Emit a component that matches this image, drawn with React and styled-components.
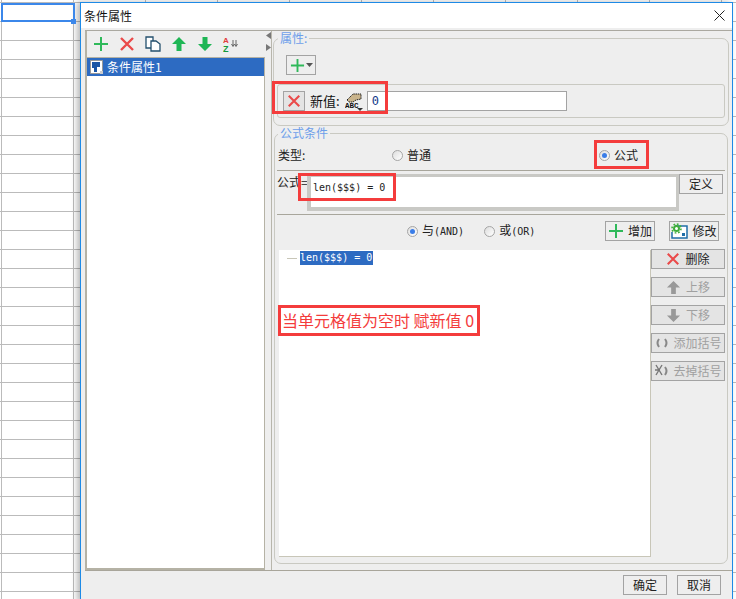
import React from "react";
import styled, { createGlobalStyle } from "styled-components";

const CJK = `"Noto Sans CJK SC", "Liberation Sans", sans-serif`;
const MONO = `"DejaVu Sans Mono", monospace`;
const RED = "#f43c3c";

const GlobalStyle = createGlobalStyle`
  html, body { margin: 0; padding: 0; background: #fff; }
  * { box-sizing: border-box; }
`;

const Sheet = styled.div`
  position: relative;
  display: flex;
  width: 736px;
  height: 599px;
  padding: 2px 3px 0 80px;
  overflow: hidden;
  font: 12px/14px ${CJK};
  color: #222;
  background-color: #fff;
  background-image: linear-gradient(#bbb 1px, transparent 1px),
    linear-gradient(90deg, #bbb 1px, transparent 1px);
  background-size: 100% 19px, 72px 100%;
  background-position: 0 2px, 1px 0;
`;

const ActiveCell = styled.div`
  position: absolute;
  left: 1px;
  top: 3px;
  width: 74px;
  height: 19px;
  border: 2px solid #3b87ea;
  &::after {
    content: "";
    position: absolute;
    right: -3px;
    bottom: -4px;
    width: 5px;
    height: 5px;
    background: #3b87ea;
  }
`;

const Dialog = styled.div`
  flex: 1;
  display: flex;
  flex-direction: column;
  height: 600px;
  border: 1px solid #1e8ae6;
  background: #eee;
  box-shadow: -3px 0 6px rgba(0, 0, 0, 0.28);
`;

const TitleBar = styled.div`
  display: flex;
  align-items: center;
  justify-content: space-between;
  height: 25px;
  padding: 0 7px 0 3px;
  background: #fff;
  color: #111;
`;

const Main = styled.div`
  display: flex;
  height: 541px;
  margin: 2px 0 0 4px;
  border-top: 1px solid #aaa8a0;
  border-bottom: 1px solid #a8a59a;
`;

const LeftPanel = styled.div`
  display: flex;
  flex-direction: column;
  width: 180px;
  border-left: 2px solid #b5b2a5;
  border-bottom: 2px solid #b5b2a5;
`;

const Toolbar = styled.div`
  display: flex;
  align-items: center;
  gap: 10px;
  height: 26px;
  padding-left: 6px;
  & > svg { flex: none; }
`;

const TreeList = styled.div`
  flex: 1;
  background: #fff;
  border-top: 1px solid #b5b2a5;
  border-right: 1px solid #b5b2a5;
`;

const TreeItem = styled.div`
  display: flex;
  align-items: center;
  gap: 4px;
  height: 18px;
  padding-left: 3px;
  background: #2d6bc2;
  color: #fff;
`;

const Splitter = styled.div`
  display: flex;
  flex-direction: column;
  align-items: center;
  gap: 5px;
  width: 7px;
  padding-top: 1px;
  border-right: 1px solid #b8b6ac;
`;

const RightPanel = styled.div`
  width: 458px;
`;

const Group = styled.fieldset`
  margin: 0 ${(p) => p.$inset}px;
  padding: 0 2px ${(p) => p.$bottom}px;
  min-width: 0;
  border: 1px solid #c9c9c2;
  border-radius: 7px;
`;

const GroupTitle = styled.legend`
  margin-left: ${(p) => p.$indent}px;
  padding: 0 2px;
  color: #6d9eea;
  line-height: 14px;
`;

const AddRow = styled.div`
  padding: 10px 0 9px 10px;
`;

const ValuePanel = styled.div`
  display: flex;
  align-items: center;
  height: 34px;
  margin: 0 1px;
  padding-left: 5px;
  border: 1px solid #c9c9c2;
  border-radius: 3px;
`;

const ValueLabel = styled.span`
  margin: 0 5px;
  font-size: 13px;
  color: #111;
`;

const ValueInput = styled.div`
  width: 200px;
  height: 20px;
  margin-left: 4px;
  padding-left: 4px;
  border: 1px solid #a3a3a3;
  background: #fff;
  font: 12px/18px ${MONO};
  color: #123a8a;
`;

const Button = styled.button`
  display: flex;
  align-items: center;
  justify-content: center;
  gap: ${(p) => p.$gap ?? 4}px;
  flex: none;
  width: ${(p) => p.$w}px;
  height: 20px;
  padding: 0;
  border: 1px solid #a3a3a3;
  border-radius: 0;
  background: ${(p) => p.$fill ?? "#eee"};
  font: 12px/14px ${CJK};
  color: ${(p) => (p.disabled ? "#a0a0a0" : "#222")};
`;

const TypeRow = styled.div`
  display: grid;
  grid-template-columns: 114px 207px 1fr;
  align-items: center;
  height: 31px;
  padding-left: 1px;
  border-bottom: 1px solid #a8a69c;
`;

const Radio = styled.span`
  display: inline-flex;
  align-items: center;
  gap: 4px;
  white-space: nowrap;
  color: #222;
`;

const RadioDot = styled.i`
  flex: none;
  width: 11px;
  height: 11px;
  border: 1px solid #a5a5a5;
  border-radius: 50%;
  background: linear-gradient(135deg, #ddd, #fff);
  &::after {
    content: "";
    display: ${(p) => (p.$on ? "block" : "none")};
    width: 5px;
    height: 5px;
    margin: 2px;
    border-radius: 50%;
    background: #3a7de8;
  }
`;

const Mono = styled.span`
  font: 10px/14px ${MONO};
`;

const FormulaRow = styled.div`
  display: flex;
  align-items: flex-start;
  height: 44px;
  padding-top: 3px;
  border-bottom: 1px solid #a8a69c;
`;

const FormulaLabel = styled.span`
  flex: none;
  width: 30px;
  line-height: 16px;
  white-space: nowrap;
`;

const FormulaBox = styled.div`
  flex: none;
  width: 372px;
  height: 37px;
  padding: 4px 0 0 2px;
  border: solid #c9c9c5;
  border-width: 3px 3px 4px 4px;
  background: #fff;
  font: 10px/14px ${MONO};
  color: #222;
`;

const LogicRow = styled.div`
  display: flex;
  align-items: flex-start;
  height: 34px;
  padding: 6px 6px 0 130px;
`;

const LogicButtons = styled.div`
  display: flex;
  gap: 14px;
  margin-left: auto;
`;

const LogicRadios = styled.div`
  display: flex;
  align-items: center;
  gap: 20px;
  height: 20px;
`;

const ListArea = styled.div`
  display: flex;
  padding-left: 2px;
`;

const RuleList = styled.div`
  display: flex;
  align-items: flex-start;
  width: 372px;
  height: 307px;
  margin-top: 1px;
  padding: 1px 0 0 8px;
  background: #fff;
  border-right: 1px solid #c8c6b8;
  border-bottom: 1px solid #c8c6b8;
`;

const TreeLine = styled.i`
  width: 10px;
  height: 1px;
  margin: 7px 3px 0 0;
  background: #c8c6b8;
`;

const SelectedRule = styled.span`
  padding-right: 1px;
  background: #2d6bc2;
  color: #fff;
  font: 10px/14px ${MONO};
`;

const SideButtons = styled.div`
  display: flex;
  flex-direction: column;
  gap: 8px;
`;

const Footer = styled.div`
  display: flex;
  justify-content: flex-end;
  gap: 10px;
  padding: 4px 11px 0 0;
`;

const Callout = styled.div`
  position: absolute;
  left: ${(p) => p.$x}px;
  top: ${(p) => p.$y}px;
  width: ${(p) => p.$w}px;
  height: ${(p) => p.$h}px;
  border: 3px solid ${RED};
  pointer-events: none;
`;

const Note = styled(Callout)`
  padding-left: 1px;
  background: #fff;
  color: ${RED};
  font: 16px/25px ${CJK};
  white-space: pre;
`;

const Icon = ({ size = 16, children }) => (
  <svg width={size} height={size} viewBox="0 0 16 16" fill="none">
    {children}
  </svg>
);

const PlusIcon = ({ size = 16 }) => (
  <Icon size={size}>
    <path d="M8 1v14M1 8h14" stroke="#2fb95a" strokeWidth="2" />
  </Icon>
);

const CrossIcon = ({ size = 16 }) => (
  <Icon size={size}>
    <path d="M2 2l12 12M14 2L2 14" stroke="#ea4a4a" strokeWidth="2.4" />
  </Icon>
);

const ArrowIcon = ({ color, down, size = 16 }) => (
  <Icon size={size}>
    <path
      d={down ? "M5.5 1h5v7H15l-7 7-7-7h4.5z" : "M8 1l7 7h-4.5v7h-5V8H1z"}
      fill={color}
    />
  </Icon>
);

const CopyIcon = () => (
  <Icon>
    <path d="M1 1h7v11H1z" fill="#fff" stroke="#24506e" strokeWidth="1.3" />
    <path d="M6 5h5l4 3v7H6z" fill="#fff" stroke="#24506e" strokeWidth="1.3" />
  </Icon>
);

const SortIcon = () => (
  <svg width="17" height="17" viewBox="0 0 17 17">
    <text x="0" y="7" fontFamily="Liberation Sans" fontSize="8" fontWeight="700" fill="#e23b3b">A</text>
    <text x="0" y="16" fontFamily="Liberation Sans" fontSize="9" fontWeight="700" fill="#149a3c">Z</text>
    <path d="M10 4v6M13 4v6M8.500 8l1.500 2.500L11.500 8M11.500 8l1.500 2.500L14.500 8" stroke="#666" fill="none" />
  </svg>
);

const PageIcon = () => (
  <svg width="13" height="15" viewBox="0 0 13 15">
    <path d="M.5.5h12v13h-12z" fill="#fff" stroke="#999" />
    <path d="M2 2h8v5H7v5H4V8H2z" fill="#1a55a5" />
    <path d="M10 11h3v3h-3z" fill="#ccc" />
  </svg>
);

const TinyArrow = ({ right }) => (
  <svg width="5" height="7" viewBox="0 0 5 7">
    <path d={right ? "M0 0l5 3.500L0 7z" : "M5 0L0 3.500 5 7z"} fill="#777" />
  </svg>
);

const CaretDown = () => (
  <svg width="7" height="4" viewBox="0 0 7 4">
    <path d="M0 0h7L3.500 4z" fill="#555" />
  </svg>
);

const HandAbcIcon = () => (
  <svg width="18" height="19" viewBox="0 0 18 19">
    <path d="M2 8l6-6h8v5l-5 1-3 2H4z" fill="#c9b48c" stroke="#222" strokeDasharray="1.5 .7" />
    <text x="0" y="16" fontFamily="Liberation Mono" fontSize="7.5" fontWeight="700" fill="#111">ABC</text>
    <path d="M12 16h6l-3 3z" fill="#333" />
  </svg>
);

const GearDocIcon = () => (
  <svg width="17" height="16" viewBox="0 0 17 16">
    <path d="M4 3h12v12H1V9" fill="#fff" stroke="#1f6ea8" strokeWidth="1.5" />
    <circle cx="5.5" cy="5.5" r="3.5" fill="#3fae3c" />
    <circle cx="5.5" cy="5.5" r="4.5" fill="none" stroke="#3fae3c" strokeWidth="1.6" strokeDasharray="1.8 1.7" />
    <circle cx="5.500" cy="5.500" r="1.500" fill="#fff" />
    <path d="M11 10h3v3h-3z" fill="#1f6ea8" />
  </svg>
);

const BracketIcon = ({ struck }) => (
  <svg width="16" height="14" viewBox="0 0 16 14">
    <path d={struck ? "M11 3q3 4 0 8" : "M5 3Q2 7 5 11M11 3q3 4 0 8"} stroke="#888" strokeWidth="2" fill="none" />
    {struck && <path d="M2 1l6 10M8 1L2 11M1 6h5" stroke="#777" strokeWidth="1.4" />}
  </svg>
);

const SideButton = (props) => <Button $w={74} $fill="#e4e4e4" $gap={5} {...props} />;

export default function App() {
  return (
    <>
      <GlobalStyle />
      <Sheet>
        <ActiveCell />
        <Dialog>
          <TitleBar>
            条件属性
            <svg width="11" height="11" viewBox="0 0 11 11">
              <path d="M.5.5l10 10M10.500.5l-10 10" stroke="#222" />
            </svg>
          </TitleBar>
          <Main>
            <LeftPanel>
              <Toolbar>
                <PlusIcon />
                <CrossIcon />
                <CopyIcon />
                <ArrowIcon color="#1fb655" />
                <ArrowIcon color="#1fb655" down />
                <SortIcon />
              </Toolbar>
              <TreeList>
                <TreeItem>
                  <PageIcon />
                  条件属性1
                </TreeItem>
              </TreeList>
            </LeftPanel>
            <Splitter>
              <TinyArrow />
              <TinyArrow right />
            </Splitter>
            <RightPanel>
              <Group $inset={1} $bottom={7}>
                <GroupTitle $indent={2}>属性:</GroupTitle>
                <AddRow>
                  <Button $w={30} $gap={1}>
                    <PlusIcon size={15} />
                    <CaretDown />
                  </Button>
                </AddRow>
                <ValuePanel>
                  <Button $w={22} $fill="#e4e4e4">
                    <CrossIcon size={14} />
                  </Button>
                  <ValueLabel>新值:</ValueLabel>
                  <HandAbcIcon />
                  <ValueInput>0</ValueInput>
                </ValuePanel>
              </Group>
              <Group $inset={2} $bottom={6}>
                <GroupTitle $indent={1}>公式条件</GroupTitle>
                <TypeRow>
                  <span>类型:</span>
                  <Radio>
                    <RadioDot />
                    普通
                  </Radio>
                  <Radio>
                    <RadioDot $on />
                    公式
                  </Radio>
                </TypeRow>
                <FormulaRow>
                  <FormulaLabel>公式=</FormulaLabel>
                  <FormulaBox>len($$$) = 0</FormulaBox>
                  <Button $w={44}>定义</Button>
                </FormulaRow>
                <LogicRow>
                  <LogicRadios>
                    <Radio>
                      <RadioDot $on />
                      <span>
                        与<Mono>(AND)</Mono>
                      </span>
                    </Radio>
                    <Radio>
                      <RadioDot />
                      <span>
                        或<Mono>(OR)</Mono>
                      </span>
                    </Radio>
                  </LogicRadios>
                  <LogicButtons>
                    <Button $w={50}>
                      <PlusIcon />
                      增加
                    </Button>
                    <Button $w={50}>
                      <GearDocIcon />
                      修改
                    </Button>
                  </LogicButtons>
                </LogicRow>
                <ListArea>
                  <RuleList>
                    <TreeLine />
                    <SelectedRule>len($$$) = 0</SelectedRule>
                  </RuleList>
                  <SideButtons>
                    <SideButton>
                      <CrossIcon size={14} />
                      删除
                    </SideButton>
                    <SideButton disabled>
                      <ArrowIcon color="#999" size={15} />
                      上移
                    </SideButton>
                    <SideButton disabled>
                      <ArrowIcon color="#999" size={15} down />
                      下移
                    </SideButton>
                    <SideButton disabled $gap={3}>
                      <BracketIcon />
                      添加括号
                    </SideButton>
                    <SideButton disabled $gap={3}>
                      <BracketIcon struck />
                      去掉括号
                    </SideButton>
                  </SideButtons>
                </ListArea>
              </Group>
            </RightPanel>
          </Main>
          <Footer>
            <Button $w={44}>确定</Button>
            <Button $w={44}>取消</Button>
          </Footer>
        </Dialog>
        <Callout $x={272} $y={81} $w={116} $h={33} />
        <Callout $x={594} $y={140} $w={55} $h={29} />
        <Callout $x={298} $y={173} $w={98} $h={28} />
        <Note $x={278} $y={305} $w={202} $h={31}>
          当单元格值为空时 赋新值 0
        </Note>
      </Sheet>
    </>
  );
}
